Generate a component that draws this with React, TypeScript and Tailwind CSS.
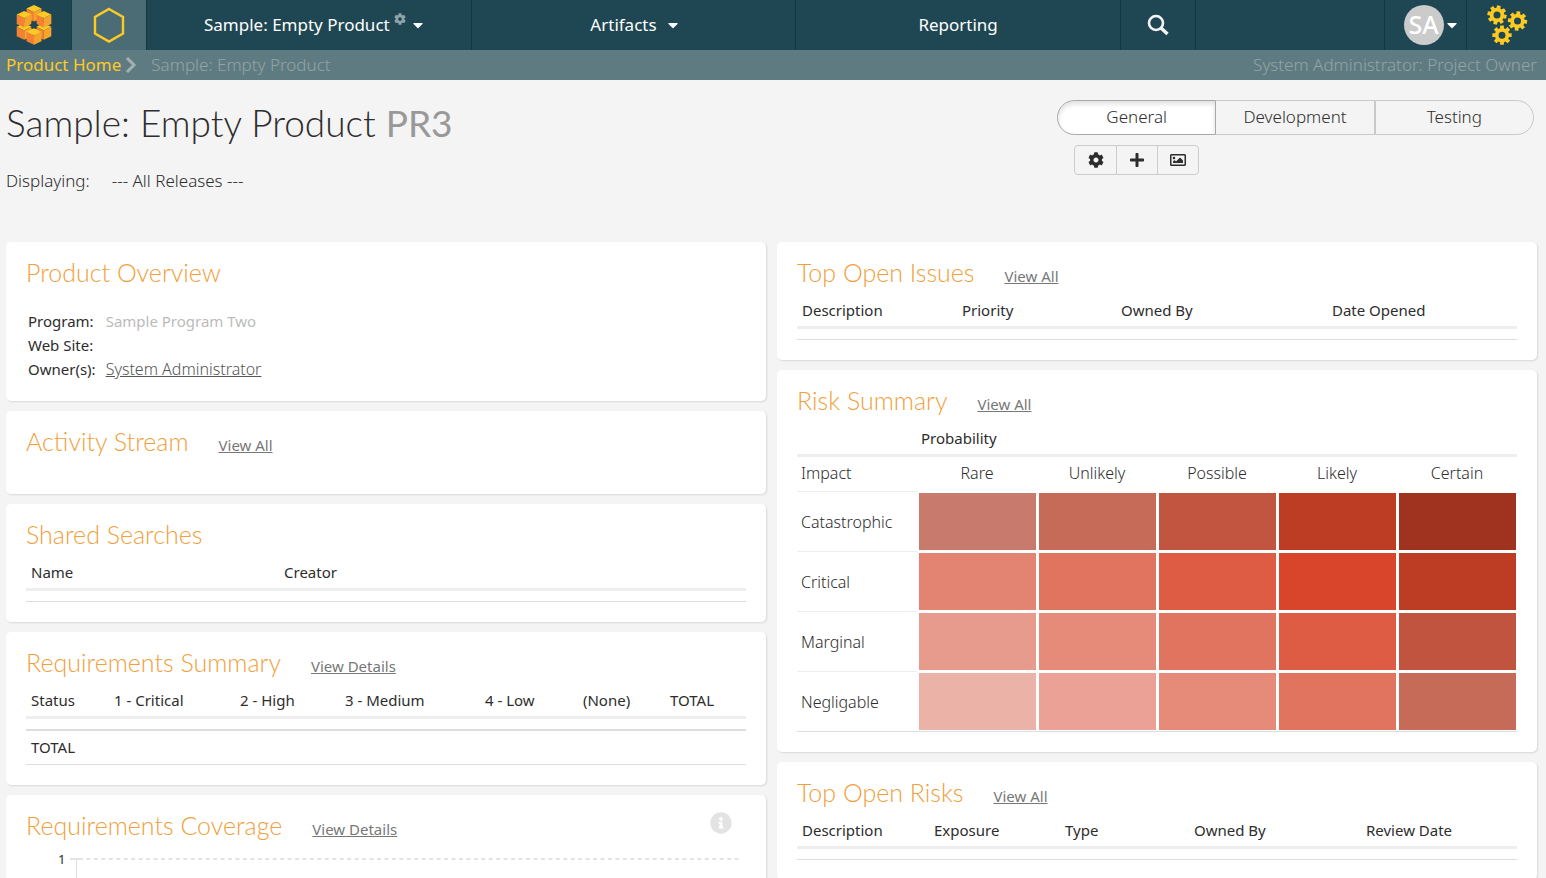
import React from "react";
import { FaCog, FaPlus, FaRegImage, FaInfoCircle, FaCaretDown } from "react-icons/fa";

type Column = { label: string; width: number };

function Cube({ x, y }: { x: number; y: number }) {
  return (
    <g transform={`translate(${x} ${y})`}>
      <path d="M0 -8.2 L7.5 -4.6 L0 -1 L-7.5 -4.6 Z" fill="#fdca24" />
      <path d="M-7.5 -4.6 L0 -1 V8.4 L-7.5 4.8 Z" fill="#f58233" />
      <path d="M7.5 -4.6 L0 -1 V8.4 L7.5 4.8 Z" fill="#f6a42b" />
    </g>
  );
}

function Logo() {
  return (
    <svg width="38" height="42" viewBox="0 0 38 42" aria-hidden="true">
      <Cube x={19} y={9.2} />
      <Cube x={9.2} y={27.4} />
      <Cube x={28.8} y={27.4} />
      <Cube x={9.2} y={15.2} />
      <Cube x={28.8} y={15.2} />
      <path
        d="M16.4 17.2 L19 18.4 L21.6 17.2 V19.6 L23 21 L21.6 22.4 V24.4 L19 23.4 L16.4 24.4 V22.4 L15 21 L16.4 19.6 Z"
        fill="#1f4753"
      />
      <Cube x={19} y={32.4} />
    </svg>
  );
}

function gearPath(cx: number, cy: number, turn: number): string {
  const teeth = 8;
  const outer = 9.8;
  const inner = 7.2;
  const points: string[] = [];
  for (let i = 0; i < teeth; i++) {
    const mid = turn + (i * 2 * Math.PI) / teeth;
    const corners: [number, number][] = [
      [inner, -0.27],
      [outer, -0.19],
      [outer, 0.19],
      [inner, 0.27],
    ];
    for (const [r, a] of corners) {
      points.push(`${(cx + r * Math.cos(mid + a)).toFixed(2)} ${(cy + r * Math.sin(mid + a)).toFixed(2)}`);
    }
  }
  const hole = `M${cx - 3.5} ${cy} a3.5 3.5 0 1 0 7 0 a3.5 3.5 0 1 0 -7 0 Z`;
  return `M${points.join(" L")} Z ${hole}`;
}

function Gears() {
  return (
    <svg width="42" height="42" viewBox="0 0 42 42" fill="#fdca24" fillRule="evenodd" aria-hidden="true">
      <path d={gearPath(11, 11, 0.2)} />
      <path d={gearPath(31.5, 17, 0.1)} />
      <path d={gearPath(16, 31.2, 0)} />
    </svg>
  );
}

function SearchIcon() {
  return (
    <svg width="22" height="22" viewBox="0 0 22 22" fill="none" stroke="#f4f4f4" aria-hidden="true">
      <circle cx="9" cy="9" r="7" strokeWidth="2.6" />
      <path d="M14 14 L20.5 20" strokeWidth="3.4" />
    </svg>
  );
}

function NavBar() {
  return (
    <nav className="flex h-[50px] shrink-0 bg-[#1f4753] text-[17px] text-white">
      <a href="#home" aria-label="Home" className="flex w-[72px] items-center justify-center border-r border-[#16404c] pr-1">
        <Logo />
      </a>
      <a href="#product" aria-label="Product" className="flex w-[75px] items-center justify-center border-r border-[#0f3643] bg-[#4c6c75]">
        <svg width="32" height="36" viewBox="0 0 32 36" aria-hidden="true">
          <path d="M16 2 L30 10 V26.5 L16 34.5 L2 26.5 V10 Z" fill="none" stroke="#fdca24" strokeWidth="2.4" />
        </svg>
      </a>
      <button className="flex w-[21%] items-center justify-center border-r border-[#0f3643] pl-3">
        <span>Sample: Empty Product</span>
        <FaCog className="mb-3 ml-1 size-3 text-[#8fa3a9]" />
        <FaCaretDown className="ml-1 size-4" />
      </button>
      <button className="flex w-[21%] items-center justify-center border-r border-[#0f3643] pl-1">
        <span>Artifacts</span>
        <FaCaretDown className="ml-2 size-4" />
      </button>
      <button className="flex w-[21%] items-center justify-center border-r border-[#0f3643]">Reporting</button>
      <button aria-label="Search" className="flex w-[75px] items-center justify-center border-r border-[#0f3643]">
        <SearchIcon />
      </button>
      <div className="flex-1 border-r border-[#0f3643]" />
      <button aria-label="Profile" className="flex w-[82px] items-center justify-center border-r border-[#0f3643] pl-3">
        <span className="flex size-10 items-center justify-center rounded-full bg-[#cbcbcb] text-[25px] font-medium">SA</span>
        <FaCaretDown className="size-4" />
      </button>
      <button aria-label="Administration" className="flex w-[79px] items-center justify-center">
        <Gears />
      </button>
    </nav>
  );
}

function Breadcrumb() {
  return (
    <div className="flex h-[30px] shrink-0 items-center bg-[#5f7b82] pr-[9px] pl-[6px] text-[17px] text-[#93a3a6]">
      <a href="#product-home" className="text-[#fdca24]">
        Product Home
      </a>
      <svg width="12" height="16" viewBox="0 0 12 16" className="mr-[14px] ml-1" aria-hidden="true">
        <path d="M2 1 L9 8 L2 15" fill="none" stroke="#a3b0b3" strokeWidth="3" />
      </svg>
      <span className="font-light">Sample: Empty Product</span>
      <span className="ml-auto font-light">System Administrator: Project Owner</span>
    </div>
  );
}

function PageHeader() {
  const tab = "h-[35px] flex-1 pb-[2px] text-[17px] font-light";
  const tool = "flex items-center justify-center";
  return (
    <header className="flex justify-between pt-5 pr-3 pl-[6px]">
      <div>
        <h1 className="font-['Lato',sans-serif] text-[37px] leading-[46px] font-light">
          Sample: Empty Product <span className="font-normal text-[#999999]">PR3</span>
        </h1>
        <div className="mt-5 flex h-[30px] items-center text-[17px] font-light">
          <label htmlFor="release" className="mr-[22px]">
            Displaying:
          </label>
          <select id="release" className="appearance-none bg-transparent">
            <option>--- All Releases ---</option>
          </select>
        </div>
      </div>
      <div className="w-[477px]">
        <div className="flex">
          <button className={`${tab} rounded-l-full border border-[#a8a8a8] bg-white shadow-[inset_0_3px_5px_rgba(0,0,0,0.125)]`}>General</button>
          <button className={`${tab} border-y border-r border-[#c9c9c9]`}>Development</button>
          <button className={`${tab} rounded-r-full border border-[#c9c9c9]`}>Testing</button>
        </div>
        <div className="mt-[10px] ml-[17px] inline-flex h-[30px] rounded-[4px] border border-[#cccccc]">
          <button aria-label="Settings" className={`${tool} w-[42px] border-r border-[#cccccc]`}>
            <FaCog className="size-4" />
          </button>
          <button aria-label="Add items" className={`${tool} w-[41px] border-r border-[#cccccc]`}>
            <FaPlus className="size-4" />
          </button>
          <button aria-label="Image" className={`${tool} w-10`}>
            <FaRegImage className="size-4" />
          </button>
        </div>
      </div>
    </header>
  );
}

function Card({ title, link, action, children }: { title: string; link?: string; action?: React.ReactNode; children?: React.ReactNode }) {
  return (
    <section className="rounded-[5px] bg-white p-5 shadow-[1px_1px_2px_rgba(0,0,0,0.12)]">
      <div className="flex h-[37px] items-start">
        <h2 className="font-['Lato',sans-serif] text-[25px] leading-5 font-light text-[#f1a03c]">{title}</h2>
        {link && (
          <a href="#details" className="ml-[30px] text-[15px] leading-7 text-[#777777] underline">
            {link}
          </a>
        )}
        {action}
      </div>
      {children}
    </section>
  );
}

function ListTable({ columns, total }: { columns: Column[]; total?: string }) {
  const sum = columns.reduce((n, c) => n + c.width, 0);
  return (
    <table className="w-full table-fixed border-separate border-spacing-0 text-left text-[15px]">
      <colgroup>
        {columns.map((c) => (
          <col key={c.label} style={{ width: `${(c.width / sum) * 100}%` }} />
        ))}
      </colgroup>
      <thead>
        <tr>
          {columns.map((c) => (
            <th key={c.label} className="h-[30px] border-b-3 border-[#eeeeee] pb-[6px] pl-[5px] leading-5 font-normal whitespace-nowrap">
              {c.label}
            </th>
          ))}
        </tr>
      </thead>
      <tbody>
        <tr>
          <td colSpan={columns.length} className={total ? "h-3 border-b-2 border-[#dddddd]" : "h-[11px] border-b border-[#dddddd]"} />
        </tr>
        {total && (
          <tr>
            <td colSpan={columns.length} className="h-[34px] border-b border-[#dddddd] pl-[5px]">
              {total}
            </td>
          </tr>
        )}
      </tbody>
    </table>
  );
}

const risks = [
  { impact: "Catastrophic", cells: ["bg-[#c87b6d]", "bg-[#c76b59]", "bg-[#c15540]", "bg-[#bc3c24]", "bg-[#a03320]"] },
  { impact: "Critical", cells: ["bg-[#e28471]", "bg-[#e1745f]", "bg-[#dd5c43]", "bg-[#d8452a]", "bg-[#bc3c24]"] },
  { impact: "Marginal", cells: ["bg-[#e79b8d]", "bg-[#e68b79]", "bg-[#e1745f]", "bg-[#dd5c43]", "bg-[#c1543e]"] },
  { impact: "Negligable", cells: ["bg-[#ebb2a8]", "bg-[#eba195]", "bg-[#e68b79]", "bg-[#e1745f]", "bg-[#c66b58]"] },
];

function RiskMatrix() {
  return (
    <table className="w-full table-fixed border-separate border-spacing-0 text-[16px]">
      <thead>
        <tr className="text-left">
          <th className="h-[30px] border-b-3 border-[#eeeeee]" />
          <th colSpan={5} className="border-b-3 border-[#eeeeee] pb-[6px] pl-1 text-[15px] leading-5 font-normal">
            Probability
          </th>
        </tr>
        <tr>
          <th className="h-[34px] pb-[2px] pl-1 text-left font-light">Impact</th>
          {["Rare", "Unlikely", "Possible", "Likely", "Certain"].map((p) => (
            <th key={p} className="pb-[2px] font-light">
              {p}
            </th>
          ))}
        </tr>
      </thead>
      <tbody>
        {risks.map((r) => (
          <tr key={r.impact}>
            <th className="h-[60px] border-t border-[#eeeeee] pl-1 text-left font-light">{r.impact}</th>
            {r.cells.map((tone, i) => (
              <td key={i} className={`border-t-2 border-r border-b border-l-2 border-white ${tone}`} />
            ))}
          </tr>
        ))}
        <tr>
          <td colSpan={6} className="h-px border-t border-[#dddddd]" />
        </tr>
      </tbody>
    </table>
  );
}

function Overview() {
  return (
    <dl className="mt-[10px] mb-px grid h-[71px] grid-cols-[auto_1fr] items-center gap-x-[10px] pl-[2px] text-[15px] leading-6">
      <dt>Program:</dt>
      <dd className="text-[#bbbbbb]">Sample Program Two</dd>
      <dt>Web Site:</dt>
      <dd />
      <dt>Owner(s):</dt>
      <dd>
        <a href="#owner" className="text-[16px] font-light text-[#555555] underline">
          System Administrator
        </a>
      </dd>
    </dl>
  );
}

function CoverageChart() {
  return (
    <div className="flex pl-8">
      <span className="w-3 text-[13px] leading-[14px]">1</span>
      <svg className="h-[240px] w-full" aria-hidden="true">
        <path d="M0 7 H9" stroke="#e3e3e3" strokeWidth="2" />
        <path d="M6.500 7 V230" stroke="#e0e0e0" />
        <line x1="9" y1="7" x2="99.200%" y2="7" stroke="#e3e3e3" strokeWidth="2" strokeDasharray="4 3.45" />
      </svg>
    </div>
  );
}

export default function App() {
  return (
    <div className="flex h-screen flex-col bg-[#f4f4f4] font-['Noto_Sans',sans-serif] text-[#2d2d2d]">
      <NavBar />
      <Breadcrumb />
      <main className="min-h-0 flex-1 overflow-y-auto [scrollbar-width:none]">
        <PageHeader />
        <div className="mt-[46px] grid grid-cols-2 items-start gap-x-[11px] pr-[9px] pb-5 pl-[6px]">
          <div className="flex flex-col gap-[10px]">
            <Card title="Product Overview">
              <Overview />
            </Card>
            <Card title="Activity Stream" link="View All">
              <div className="h-[6px]" />
            </Card>
            <Card title="Shared Searches">
              <ListTable
                columns={[
                  { label: "Name", width: 253 },
                  { label: "Creator", width: 467 },
                ]}
              />
            </Card>
            <Card title="Requirements Summary" link="View Details">
              <ListTable
                total="TOTAL"
                columns={[
                  { label: "Status", width: 83 },
                  { label: "1 - Critical", width: 126 },
                  { label: "2 - High", width: 105 },
                  { label: "3 - Medium", width: 140 },
                  { label: "4 - Low", width: 98 },
                  { label: "(None)", width: 87 },
                  { label: "TOTAL", width: 81 },
                ]}
              />
            </Card>
            <Card
              title="Requirements Coverage"
              link="View Details"
              action={
                <button aria-label="Information" className="mr-[14px] -mt-[3px] ml-auto">
                  <FaInfoCircle className="size-[22px] text-[#e3e3e3]" />
                </button>
              }
            >
              <CoverageChart />
            </Card>
          </div>
          <div className="flex flex-col gap-[10px]">
            <Card title="Top Open Issues" link="View All">
              <ListTable
                columns={[
                  { label: "Description", width: 160 },
                  { label: "Priority", width: 159 },
                  { label: "Owned By", width: 211 },
                  { label: "Date Opened", width: 190 },
                ]}
              />
            </Card>
            <Card title="Risk Summary" link="View All">
              <RiskMatrix />
            </Card>
            <Card title="Top Open Risks" link="View All">
              <ListTable
                columns={[
                  { label: "Description", width: 132 },
                  { label: "Exposure", width: 131 },
                  { label: "Type", width: 129 },
                  { label: "Owned By", width: 172 },
                  { label: "Review Date", width: 156 },
                ]}
              />
            </Card>
          </div>
        </div>
      </main>
    </div>
  );
}
